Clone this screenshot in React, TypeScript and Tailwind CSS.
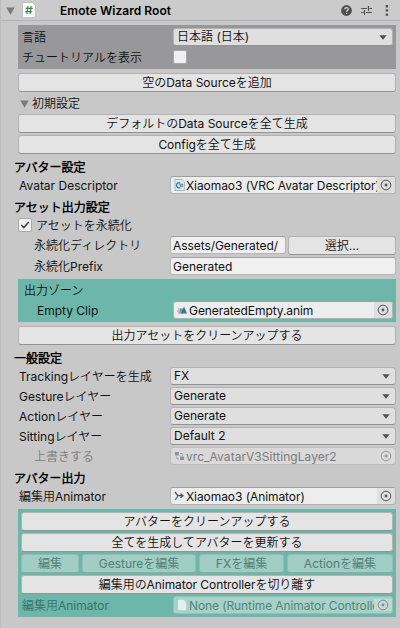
import type { ReactNode } from 'react';

const Arrow = ({ className = '' }: { className?: string }) => (
  <svg className={`shrink-0 ${className}`} width="9" height="8" viewBox="0 0 9 8">
    <path d="M0.3 0.5h8.4L4.5 7.7z" fill="#7b7b7b" />
  </svg>
);

const Picker = () => (
  <span className="flex h-full w-[18px] shrink-0 items-center justify-center bg-[#dedede]">
    <svg width="12" height="12" viewBox="0 0 12 12">
      <circle cx="6" cy="6" r="4.8" fill="none" stroke="#555" strokeWidth="1" />
      <circle cx="6" cy="6" r="1.4" fill="#555" />
    </svg>
  </span>
);

const Button = ({ children, className = '' }: { children: ReactNode; className?: string }) => (
  <button
    className={`flex h-[19px] items-center justify-center rounded-[3px] border border-[#b2b2b2] border-b-[#939393] bg-[#e4e4e4] whitespace-nowrap ${className}`}
  >
    {children}
  </button>
);

const DisabledButton = ({ children, className }: { children: ReactNode; className: string }) => (
  <button
    disabled
    className={`flex h-[19px] items-center justify-center rounded-[3px] border border-[#8dbfb5] border-b-[#7fb3a8] bg-[#a1cdc4] whitespace-nowrap text-[#4f7f76] ${className}`}
  >
    {children}
  </button>
);

const Dropdown = ({ children, className = '' }: { children: ReactNode; className?: string }) => (
  <div
    className={`flex h-[18px] items-center justify-between rounded-[3px] border border-[#b2b2b2] border-b-[#939393] bg-[#dfdfdf] pr-[5px] pl-[3px] ${className}`}
  >
    <span>{children}</span>
    <svg width="8" height="5" viewBox="0 0 8 5">
      <path d="M0.3 0.3h7.4L4 4.7z" fill="#505050" />
    </svg>
  </div>
);

const ObjectField = ({ icon, children, className = '' }: { icon: ReactNode; children: ReactNode; className?: string }) => (
  <div
    className={`flex h-[18px] items-center overflow-hidden rounded-[3px] border border-[#b2b2b2] border-t-[#a0a0a0] bg-[#ededed] pl-[3px] ${className}`}
  >
    <span className="mr-px flex w-[11px] shrink-0 items-center">{icon}</span>
    <span className="min-w-0 flex-1 overflow-hidden pt-[2px] tracking-[-0.07px] whitespace-nowrap">{children}</span>
    <Picker />
  </div>
);

const TextField = ({ children, className = '' }: { children: ReactNode; className?: string }) => (
  <div
    className={`flex h-[18px] items-center rounded-[3px] border border-[#b7b7b7] border-t-[#a0a0a0] bg-[#f0f0f0] pt-[2px] pl-[2px] ${className}`}
  >
    {children}
  </div>
);

const Heading = ({ children, className = '' }: { children: ReactNode; className?: string }) => (
  <h2 className={`-ml-1 flex h-[18px] items-center pt-[2px] font-bold text-black ${className}`}>{children}</h2>
);

const Row = ({ label, children }: { label: string; children: ReactNode }) => (
  <div className="flex h-[18px] items-center">
    <span className="w-[152px] shrink-0 pt-[2px] pl-px whitespace-nowrap">{label}</span>
    {children}
  </div>
);

const ScriptIcon = () => (
  <svg width="11" height="12" viewBox="0 0 11 12">
    <path d="M1 .5h7l2.3 2.3v8.7H1z" fill="#e4ecf1" stroke="#9aa7b0" strokeWidth=".8" />
    <path d="M6.2 4A2.6 2.6 0 1 0 6.4 8.6" fill="none" stroke="#3d81b4" strokeWidth="1.4" />
    <path d="M5.3 5.5h4M5.3 7.1h4M6.6 4.5v3.6M8.1 4.5v3.6" stroke="#3d81b4" strokeWidth=".7" />
  </svg>
);

const ClipIcon = () => (
  <svg width="11" height="10" viewBox="0 0 11 10">
    <path d="M1 4h3M0 6h3M1 8h2" stroke="#8d9da3" strokeWidth="1" />
    <path d="M3 3.5h3V8.5H2.5z" fill="#8399a3" />
    <path d="M7 1.5l3 7H4z" fill="#38738a" />
  </svg>
);

const LayerIcon = () => (
  <svg width="11" height="12" viewBox="0 0 11 12">
    <path d="M1 2h4v3.5H1zM6 6.5h4V10H6z" fill="#929292" />
    <path d="M6 3.5h2.3V6M2.8 6.5v2.3H5" fill="none" stroke="#7fb1bd" strokeWidth="1" />
  </svg>
);

const AnimatorIcon = () => (
  <svg width="11" height="12" viewBox="0 0 11 12">
    <path d="M1 2l2.8 3.7H8M6.5 3.7L9 5.8 6.5 7.8" fill="none" stroke="#505050" strokeWidth="1.3" />
    <path d="M3.8 6.2L1.2 9.8" stroke="#39879b" strokeWidth="1.4" />
  </svg>
);

const FileIcon = () => (
  <svg width="10" height="12" viewBox="0 0 10 12">
    <path d="M2 .8h4.7L9.3 3.4v7.8H2a1 1 0 0 1-1-1V1.8a1 1 0 0 1 1-1z" fill="#e3f0ed" />
  </svg>
);

export default function App() {
  return (
    <div className="h-[628px] w-[400px] overflow-hidden border-l border-[#bcbcbc] bg-[#c8c8c8] font-['Inter','Noto_Sans_CJK_JP_DemiLight','Noto_Sans_CJK_JP',sans-serif] text-[12px] leading-[18px] text-[#111]">
      <header className="flex h-[21px] items-center border-b border-[#b3b3b3] bg-[#cbcbcb] pl-[5px]">
        <Arrow className="mt-px" />
        <svg className="ml-[7px]" width="14" height="16" viewBox="0 0 14 16">
          <path d="M2 .5h8.5L13.5 3.5V14a1.5 1.5 0 0 1-1.5 1.5H2A1.5 1.5 0 0 1 .5 14V2A1.5 1.5 0 0 1 2 .5z" fill="#fafafa" stroke="#aeb5ae" strokeWidth=".7" />
          <path d="M6 4L4.8 12M9.2 4L8 12M3.7 6.4h7M3.2 9.6h7" stroke="#3d8a3d" strokeWidth="1.2" />
        </svg>
        <span className="ml-[24px] flex-1 pt-[2px] font-semibold tracking-[0.05px] text-black">Emote Wizard Root</span>
        <svg width="11" height="11" viewBox="0 0 10 10">
          <circle cx="5" cy="5" r="4.9" fill="#505050" />
          <path d="M3.4 3.9c0-2.1 3.2-2 3.2-.1 0 1.2-1.5 1.1-1.5 2.3M5.1 7v1.2" fill="none" stroke="#d0d0d0" strokeWidth="1.2" />
        </svg>
        <svg className="ml-[9px]" width="11" height="11" viewBox="0 0 11 11">
          <path d="M0 3.5h6M8.5 3.5H11M0 7.5h2.5M5 7.5h6M7.5 1v5M3.5 5v5" stroke="#505050" strokeWidth="1.2" />
        </svg>
        <svg className="mr-[11px] ml-[13px]" width="4" height="11" viewBox="0 0 4 11">
          <path d="M.7 0h2.4v2.4H.7zM.7 4.2h2.4v2.4H.7zM.7 8.4h2.4v2.4H.7z" fill="#505050" />
        </svg>
      </header>

      <main className="mt-1 mr-1 ml-[17px] flex flex-col">
        <section className="h-[44px] bg-[#98989a] pt-[3px] pr-[3px] pl-[4px]">
          <div className="flex h-[18px] items-center">
            <span className="w-[151px] shrink-0 pt-px">言語</span>
            <Dropdown className="flex-1">日本語 (日本)</Dropdown>
          </div>
          <div className="mt-[2px] flex h-[18px] items-center">
            <span className="w-[151px] shrink-0 pt-px">チュートリアルを表示</span>
            <span className="size-[14px] rounded-[2px] border border-[#a8a8a8] bg-[#f0f0f0]" />
          </div>
        </section>

        <Button className="mt-1">空のData Sourceを追加</Button>
        <div className="mt-[2px] flex h-[20px] items-center pl-[2px]">
          <Arrow className="mr-[3px]" />
          初期設定
        </div>
        <Button>デフォルトのData Sourceを全て生成</Button>
        <Button className="mt-[2px] tracking-[-0.05px]">Configを全て生成</Button>

        <Heading className="mt-[4px]">アバター設定</Heading>
        <Row label="Avatar Descriptor">
          <ObjectField className="flex-1" icon={<ScriptIcon />}>Xiaomao3 (VRC Avatar Descriptor)</ObjectField>
        </Row>

        <Heading className="mt-[4px]">アセット出力設定</Heading>
        <div className="flex h-[18px] items-center">
          <span className="mr-[4px] flex size-[14px] items-center justify-center rounded-[2px] border border-[#a8a8a8] bg-[#f0f0f0]">
            <svg width="10" height="10" viewBox="0 0 10 10">
              <path d="M1.3 5l2.5 2.6L8.8 2" fill="none" stroke="#404040" strokeWidth="1.5" />
            </svg>
          </span>
          <span className="pt-px">アセットを永続化</span>
        </div>
        <div className="mt-[2px] flex h-[19px] items-start">
          <span className="w-[152px] shrink-0 pt-px pl-[16px]">永続化ディレクトリ</span>
          <TextField className="w-[116px] tracking-[-0.07px]">Assets/Generated/</TextField>
          <Button className="ml-[2px] flex-1">選択...</Button>
        </div>
        <div className="mt-[2px] flex h-[18px] items-center">
          <span className="w-[152px] shrink-0 pt-[2px] pl-[16px]">永続化Prefix</span>
          <TextField className="flex-1">Generated</TextField>
        </div>

        <section className="mt-1 h-[43px] bg-[#6cb7aa] pt-[2px] pr-[3px]">
          <div className="h-[18px] pt-px pl-[6px]">出力ゾーン</div>
          <div className="mt-[2px] flex h-[18px] items-center">
            <span className="w-[155px] shrink-0 pt-[2px] pl-[19px]">Empty Clip</span>
            <ObjectField className="flex-1" icon={<ClipIcon />}>GeneratedEmpty.anim</ObjectField>
          </div>
        </section>

        <Button className="mt-1">出力アセットをクリーンアップする</Button>

        <Heading className="mt-[4px]">一般設定</Heading>
        <div className="flex flex-col gap-[2px]">
          <Row label="Trackingレイヤーを生成"><Dropdown className="flex-1">FX</Dropdown></Row>
          <Row label="Gestureレイヤー"><Dropdown className="flex-1">Generate</Dropdown></Row>
          <Row label="Actionレイヤー"><Dropdown className="flex-1">Generate</Dropdown></Row>
          <Row label="Sittingレイヤー"><Dropdown className="flex-1">Default 2</Dropdown></Row>
          <div className="flex h-[18px] items-center text-[#7c7c7c]">
            <span className="w-[152px] shrink-0 pt-px pl-[16px]">上書きする</span>
            <div className="flex h-[18px] flex-1 items-center rounded-[3px] border border-[#bdbdbd] bg-[#d9d9d9] pl-[3px]">
              <span className="mr-px flex w-[11px]"><LayerIcon /></span>
              <span className="flex-1 pt-[2px] tracking-[0.05px]">vrc_AvatarV3SittingLayer2</span>
              <span className="flex w-[18px] justify-center opacity-50"><Picker /></span>
            </div>
          </div>
        </div>

        <Heading className="mt-[4px]">アバター出力</Heading>
        <Row label="編集用Animator">
          <ObjectField className="flex-1" icon={<AnimatorIcon />}>Xiaomao3 (Animator)</ObjectField>
        </Row>

        <section className="mt-1 flex h-[108px] flex-col gap-[2px] bg-[#6cb7aa] p-[3px]">
          <Button>アバターをクリーンアップする</Button>
          <Button>全てを生成してアバターを更新する</Button>
          <div className="flex gap-[3px]">
            <DisabledButton className="w-[58px]">編集</DisabledButton>
            <DisabledButton className="w-[114px]">Gestureを編集</DisabledButton>
            <DisabledButton className="w-[85px]">FXを編集</DisabledButton>
            <DisabledButton className="flex-1">Actionを編集</DisabledButton>
          </div>
          <Button className="tracking-[-0.07px]">編集用のAnimator Controllerを切り離す</Button>
          <div className="flex h-[18px] items-center text-[#3d7269]">
            <span className="w-[152px] shrink-0 pt-[2px] pl-px">編集用Animator</span>
            <div className="flex h-[18px] min-w-0 flex-1 items-center rounded-[3px] border border-[#90c2b8] bg-[#a7d2ca] pl-[3px] text-[#568278]">
              <span className="mr-px flex w-[11px] shrink-0"><FileIcon /></span>
              <span className="min-w-0 flex-1 overflow-hidden pt-[2px] tracking-[-0.1px] whitespace-nowrap">None (Runtime Animator Controller)</span>
              <span className="flex w-[18px] shrink-0 justify-center opacity-50"><Picker /></span>
            </div>
          </div>
        </section>
      </main>
    </div>
  );
}
